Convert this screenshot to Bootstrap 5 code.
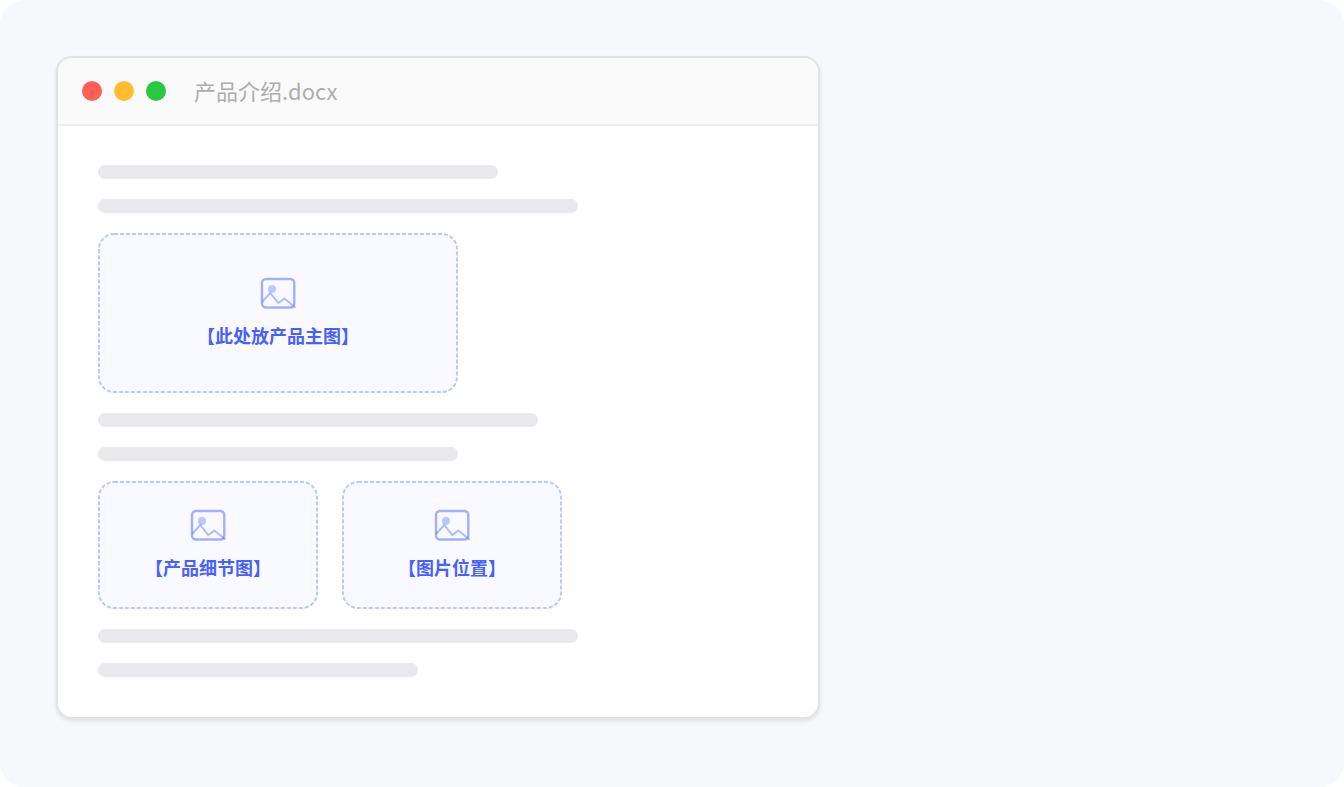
<!DOCTYPE html>
<html lang="zh-CN">
<head>
<meta charset="utf-8">
<meta name="viewport" content="width=device-width, initial-scale=1">
<title>产品介绍.docx</title>
<link href="https://cdn.jsdelivr.net/npm/bootstrap@5.3.0/dist/css/bootstrap.min.css" rel="stylesheet">
<style>
  body { background: #fff; font-family: "Noto Sans CJK SC", sans-serif; }
  .stage { background: #f7f8fc; border-radius: 24px; padding: 56px; }
  .doc-window { max-width: 764px; border: 2px solid #e3e3e5; border-radius: 16px; box-shadow: 0 2px 4px rgba(0, 0, 0, .1); }
  .doc-header { background: #fafafa; border-bottom: 2px solid #ececf1; padding: 16px 24px; gap: 12px; }
  .dot { width: 20px; height: 20px; border-radius: 50%; }
  .dot-close { background: #ff5f57; }
  .dot-min { background: #febc2e; }
  .dot-max { background: #28c840; }
  .doc-title { font-size: 22px; line-height: 32px; padding-bottom: 2px; color: #adadad; margin-left: 16px; }
  .doc-body { padding: 39px 40px 40px; gap: 20px; }
  .text-line { height: 14px; border-radius: 7px; background: #e8e8ed; max-width: 100%; }
  .slot-row { gap: 24px; }
  .slot { border-radius: 16px; background: #f9faff; color: #4760ff; gap: 8px; padding-bottom: 4px; max-width: 100%; position: relative; }
  .slot-outline { position: absolute; inset: 0; width: 100%; height: 100%; }
  .slot-outline rect { width: calc(100% - 2px); height: calc(100% - 2px); }
  .slot-main { width: 360px; height: 160px; }
  .slot-small { width: 220px; height: 128px; }
  .slot-label { font-size: 18px; line-height: 28px; font-weight: 700; }
</style>
</head>
<body>
<svg class="d-none" aria-hidden="true">
  <symbol id="picture" viewBox="0 0 40 40">
    <rect x="4" y="6" width="32.300" height="28.500" rx="4" fill="none" stroke="#a3affe" stroke-width="2.400"/>
    <circle cx="14" cy="16" r="4" fill="#bdc7ff"/>
    <path d="M4 29 12.300 20 20.300 30 26.300 25.500 37.500 34.500" fill="none" stroke="#4760ff" stroke-opacity=".4" stroke-width="2"/>
  </symbol>
</svg>
<main class="stage min-vh-100">
  <section class="doc-window bg-white overflow-hidden w-100">
    <header class="doc-header d-flex align-items-center">
      <span class="dot dot-close"></span>
      <span class="dot dot-min"></span>
      <span class="dot dot-max"></span>
      <h1 class="doc-title fw-normal mb-0">产品介绍.docx</h1>
    </header>
    <div class="doc-body d-flex flex-column">
      <div class="text-line" style="width:400px"></div>
      <div class="text-line" style="width:480px"></div>
      <div class="slot slot-main d-flex flex-column align-items-center justify-content-center">
        <svg class="slot-outline" aria-hidden="true"><rect x="1" y="1" rx="15" fill="none" stroke="#bdc7ff" stroke-width="2" stroke-dasharray="4 2"/></svg>
        <svg width="40" height="40" aria-hidden="true"><use href="#picture"/></svg>
        <span class="slot-label">【此处放产品主图】</span>
      </div>
      <div class="text-line" style="width:440px"></div>
      <div class="text-line" style="width:360px"></div>
      <div class="slot-row d-flex flex-wrap">
        <div class="slot slot-small d-flex flex-column align-items-center justify-content-center">
          <svg class="slot-outline" aria-hidden="true"><rect x="1" y="1" rx="15" fill="none" stroke="#bdc7ff" stroke-width="2" stroke-dasharray="4 2"/></svg>
          <svg width="40" height="40" aria-hidden="true"><use href="#picture"/></svg>
          <span class="slot-label">【产品细节图】</span>
        </div>
        <div class="slot slot-small d-flex flex-column align-items-center justify-content-center">
          <svg class="slot-outline" aria-hidden="true"><rect x="1" y="1" rx="15" fill="none" stroke="#bdc7ff" stroke-width="2" stroke-dasharray="4 2"/></svg>
          <svg width="40" height="40" aria-hidden="true"><use href="#picture"/></svg>
          <span class="slot-label">【图片位置】</span>
        </div>
      </div>
      <div class="text-line" style="width:480px"></div>
      <div class="text-line" style="width:320px"></div>
    </div>
  </section>
</main>
<script src="https://cdn.jsdelivr.net/npm/bootstrap@5.3.0/dist/js/bootstrap.bundle.min.js"></script>
</body>
</html>
